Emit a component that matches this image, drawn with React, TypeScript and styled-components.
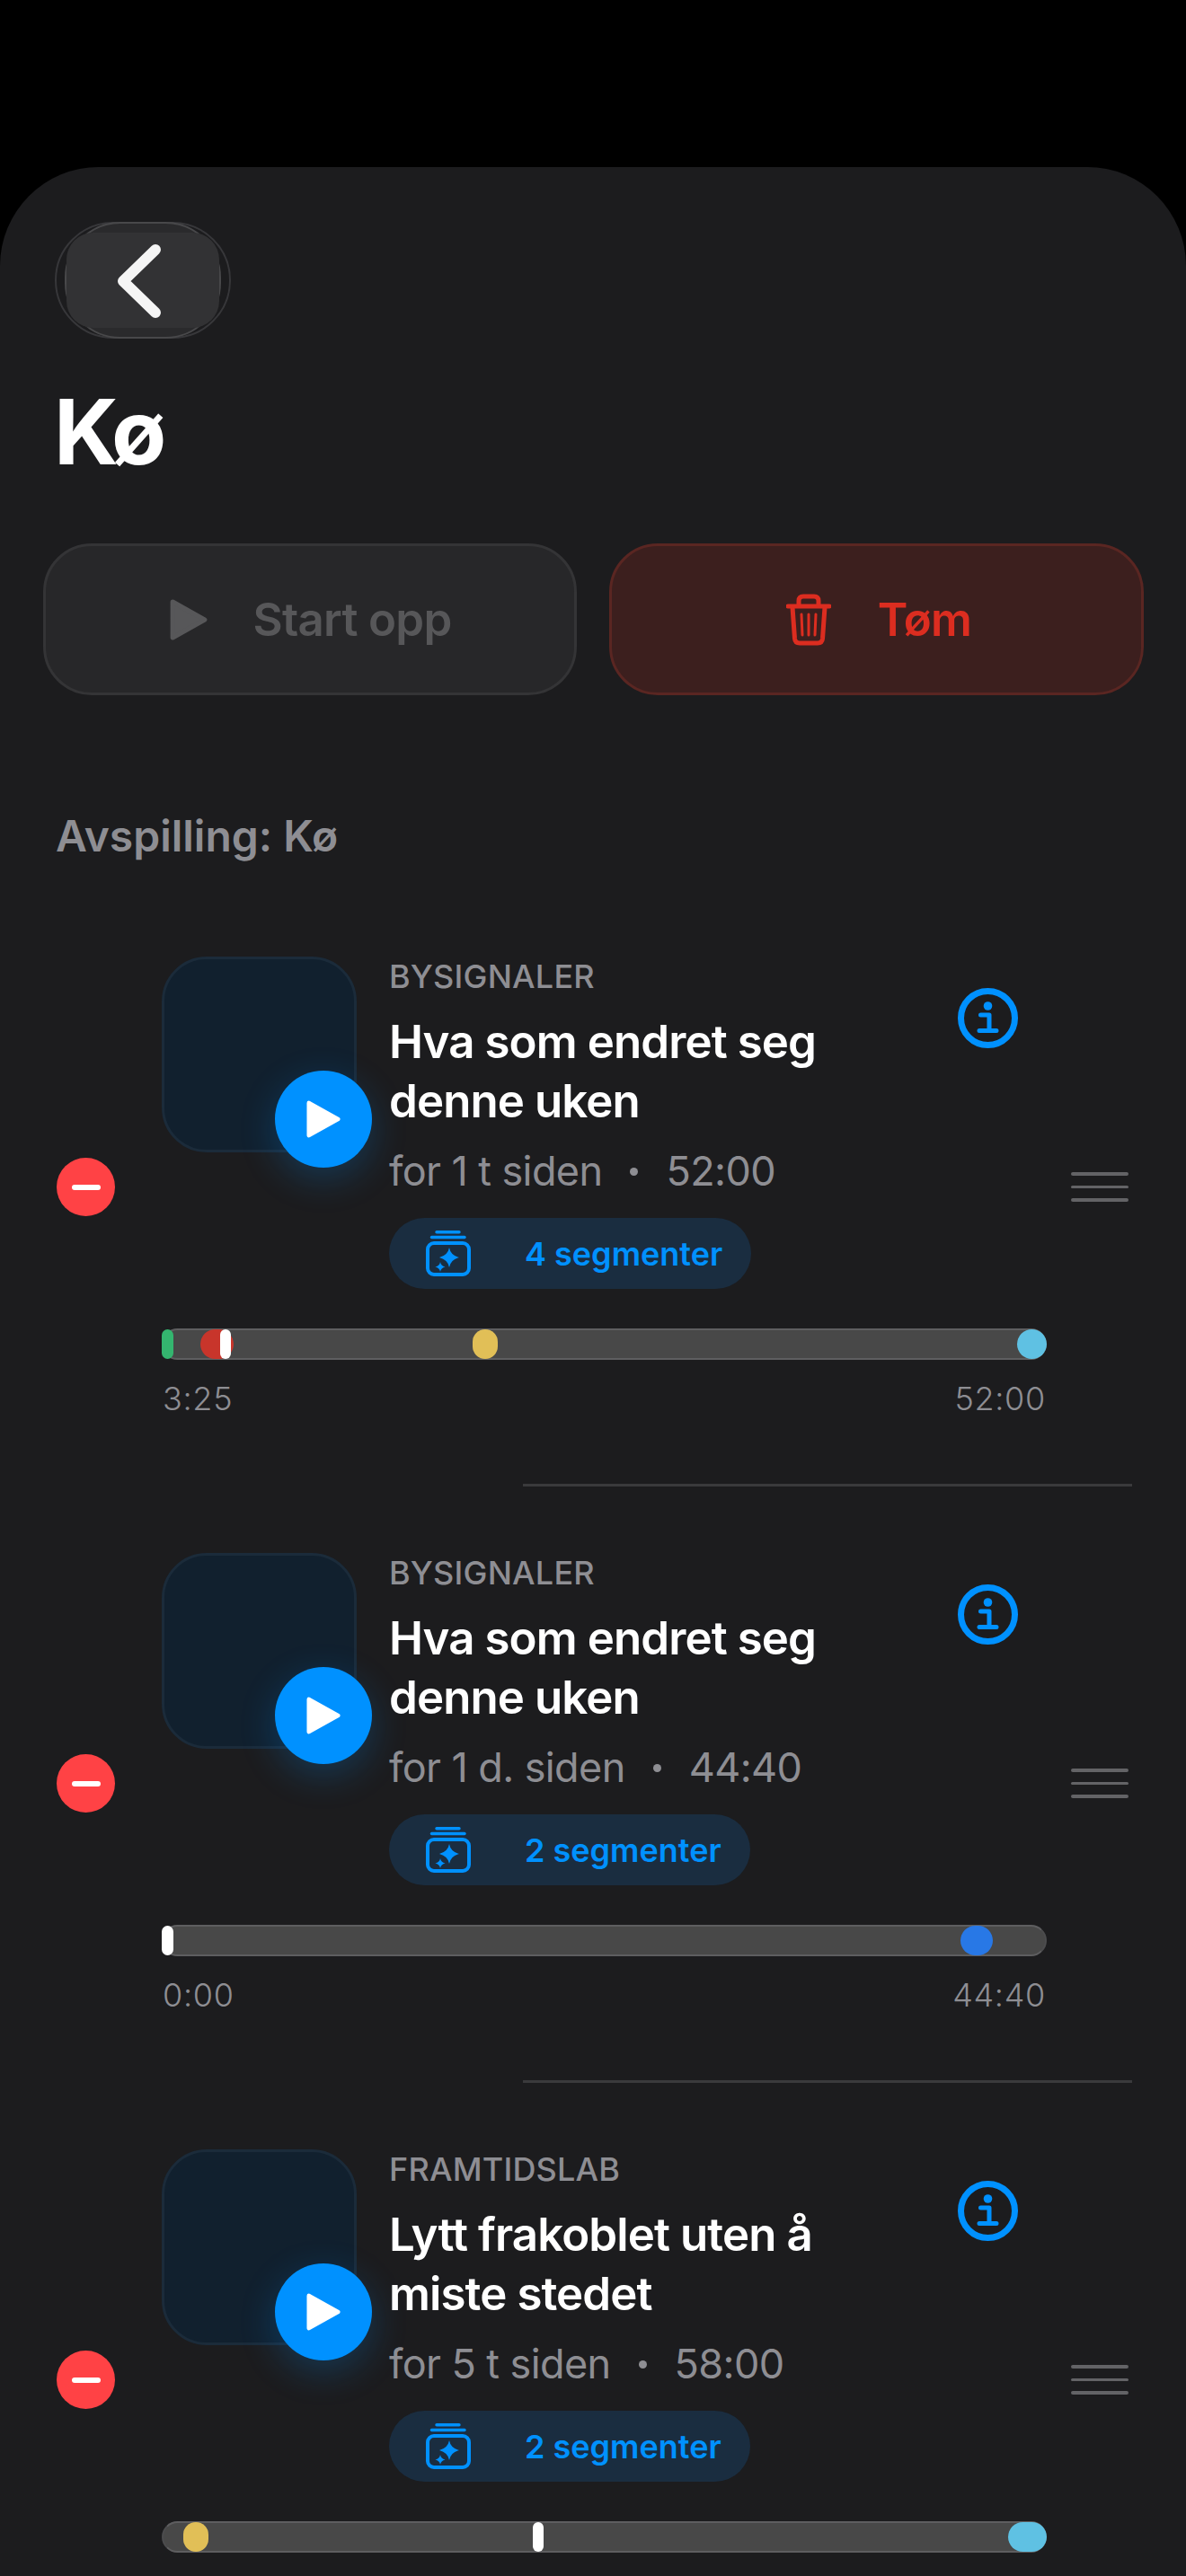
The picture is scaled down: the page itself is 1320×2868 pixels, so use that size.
import React from 'react';
import styled, { createGlobalStyle } from 'styled-components';

const GlobalStyle = createGlobalStyle`
  html, body {
    margin: 0;
    padding: 0;
    background: #000;
  }
  #root {
    height: 2868px;
    overflow: hidden;
  }
  * {
    box-sizing: border-box;
  }
`;

const Sheet = styled.div`
  margin-top: 186px;
  height: 2682px;
  overflow: hidden;
  background: #1c1c1e;
  border-radius: 110px 110px 0 0;
  font-family: Inter, "Noto Sans", sans-serif;
  padding-top: 61px;
`;

const BackButton = styled.div`
  position: relative;
  width: 196px;
  height: 130px;
  margin-left: 61px;
  border: 2px solid #37373a;
  border-radius: 65px;
  display: flex;
  align-items: center;
  justify-content: center;

  &::before {
    content: '';
    position: absolute;
    inset: -2px 9px;
    border: 2px solid #48484a;
    border-radius: 62px;
    background: #2a2a2c;
  }

  &::after {
    content: '';
    position: absolute;
    inset: 10px 11px;
    background: #323234;
    border-radius: 30px;
  }

  svg {
    position: relative;
    z-index: 1;
    margin: 2px 0 0 -9px;
  }
`;

const PageTitle = styled.h1`
  margin: 44px 0 0 60px;
  color: #fff;
  font-size: 100px;
  line-height: 120px;
  font-weight: 700;
  letter-spacing: -4px;
`;

const ActionBar = styled.div`
  display: grid;
  grid-template-columns: 594px 595px;
  gap: 36px;
  margin: 64px 0 0 48px;
`;

const ActionButton = styled.div<{ $danger?: boolean; $gap: number }>`
  height: 169px;
  padding-left: ${(p) => (p.$danger ? 5 : 2)}px;
  border-radius: 54px;
  border: 3px solid ${(p) => (p.$danger ? '#5a2622' : '#343436')};
  background: ${(p) => (p.$danger ? '#3c1f1e' : '#272729')};
  color: ${(p) => (p.$danger ? '#dc2d20' : '#575759')};
  display: flex;
  align-items: center;
  justify-content: center;
  gap: ${(p) => p.$gap}px;
  font-size: 51px;
  font-weight: 600;
  letter-spacing: -0.7px;
`;

const SectionLabel = styled.div`
  margin: 127px 0 30px 62px;
  color: #8e8e93;
  font-size: 48px;
  line-height: 60px;
  font-weight: 600;
`;

const Row = styled.div`
  display: flex;
  align-items: center;
  height: 661px;
  padding-left: 63px;
`;

const RemoveButton = styled.div`
  flex: none;
  width: 65px;
  height: 65px;
  border-radius: 50%;
  background: #ff4245;
  display: flex;
  align-items: center;
  justify-content: center;

  &::before {
    content: '';
    width: 32px;
    height: 6px;
    border-radius: 3px;
    background: #fff;
  }
`;

const RowMain = styled.div`
  flex: none;
  align-self: flex-start;
  width: 985px;
  margin: 74px 0 0 52px;
`;

const DragHandle = styled.div`
  flex: none;
  width: 64px;
  margin-left: 27px;
  display: flex;
  flex-direction: column;
  gap: 11px;

  span {
    height: 3.5px;
    border-radius: 2px;
    background: #636366;
  }
`;

const Episode = styled.div`
  display: flex;
  align-items: flex-start;
`;

const Artwork = styled.div`
  position: relative;
  flex: none;
  width: 217px;
  height: 218px;
  border-radius: 50px;
  background: #11202e;
  border: 3px solid #1b2b3a;
`;

const PlayButton = styled.div`
  position: absolute;
  left: 123px;
  top: 124px;
  width: 108px;
  height: 108px;
  border-radius: 50%;
  background: #0091ff;
  box-shadow: 0 12px 40px rgba(0, 145, 255, 0.24);
  display: flex;
  align-items: center;
  justify-content: center;
`;

const EpisodeText = styled.div`
  flex: none;
  width: 633px;
  margin-left: 36px;
`;

const Category = styled.div`
  color: #8e8e93;
  font-size: 36px;
  line-height: 44px;
  font-weight: 500;
  letter-spacing: 0.2px;
  text-transform: uppercase;
`;

const EpisodeTitle = styled.div`
  margin-top: 18px;
  color: #fff;
  font-size: 51px;
  line-height: 66px;
  font-weight: 600;
  letter-spacing: -0.9px;
`;

const Meta = styled.div`
  margin-top: 16px;
  display: flex;
  align-items: center;
  gap: 31px;
  color: #8e8e93;
  font-size: 45px;
  line-height: 58px;
  letter-spacing: -0.6px;
`;

const MetaDot = styled.span`
  width: 9px;
  height: 9px;
  border-radius: 50%;
  background: #8e8e93;
`;

const SegmentPill = styled.div`
  display: inline-flex;
  align-items: center;
  height: 79px;
  margin-top: 23px;
  padding: 0 32px 0 41px;
  gap: 60px;
  border-radius: 40px;
  background: #1a2d40;
  color: #0091ff;
  font-size: 36px;
  font-weight: 600;
`;

const InfoButton = styled.div`
  flex: none;
  margin-top: 35px;
  width: 67px;
  height: 67px;
`;

const Track = styled.div`
  position: relative;
  margin-top: 44px;
  height: 35px;
  border-radius: 18px;
  background: #484848;
  border: 2px solid #5e5e60;
  border-left-color: #4c4c4e;
  border-right-color: #4c4c4e;
`;

const Marker = styled.div<{ $color: string }>`
  position: absolute;
  top: -1px;
  bottom: -1px;
  border-radius: 17px;
  background: ${(p) => p.$color};
`;

const TimeRow = styled.div`
  display: flex;
  justify-content: space-between;
  margin-top: 21px;
  padding: 0 1px;
  color: #8e8e93;
  font-size: 36px;
  line-height: 44px;
  font-weight: 300;
  letter-spacing: 0.7px;
`;

const Divider = styled.div`
  height: 3px;
  width: 678px;
  margin-left: 582px;
  background: #3a3a3c;
`;

type Mark = { left: number; width: number; color: string };

type Item = {
  show: string;
  title: string[];
  age: string;
  length: string;
  segments: string;
  elapsed?: string;
  marks: Mark[];
};

const GREEN = '#34b56f';
const RED = '#c8352b';
const YELLOW = '#e1bf57';
const CYAN = '#5fc1e3';
const BLUE = '#2878e6';
const WHITE = '#ffffff';

const items: Item[] = [
  {
    show: 'Bysignaler',
    title: ['Hva som endret seg', 'denne uken'],
    age: 'for 1 t siden',
    length: '52:00',
    segments: '4 segmenter',
    elapsed: '3:25',
    marks: [
      { left: 0, width: 13, color: GREEN },
      { left: 43, width: 37, color: RED },
      { left: 65, width: 12, color: WHITE },
      { left: 346, width: 28, color: YELLOW },
      { left: 952, width: 33, color: CYAN },
    ],
  },
  {
    show: 'Bysignaler',
    title: ['Hva som endret seg', 'denne uken'],
    age: 'for 1 d. siden',
    length: '44:40',
    segments: '2 segmenter',
    elapsed: '0:00',
    marks: [
      { left: 889, width: 36, color: BLUE },
      { left: 0, width: 13, color: WHITE },
    ],
  },
  {
    // the time labels of this row fall below the fold
    show: 'Framtidslab',
    title: ['Lytt frakoblet uten å', 'miste stedet'],
    age: 'for 5 t siden',
    length: '58:00',
    segments: '2 segmenter',
    marks: [
      { left: 24, width: 28, color: YELLOW },
      { left: 413, width: 12, color: WHITE },
      { left: 942, width: 43, color: CYAN },
    ],
  },
];

const ChevronIcon = () => (
  <svg width="50" height="82" viewBox="0 0 50 82">
    <path d="M43 6 L7 41 L43 76" fill="none" stroke="#f5f5f5" strokeWidth="12" strokeLinecap="round" strokeLinejoin="round" />
  </svg>
);

const SolidPlay = ({ w, h, color }: { w: number; h: number; color: string }) => (
  <svg width={w} height={h} viewBox="0 0 40 44">
    <path d="M3 3 L37 22 L3 41 Z" fill={color} stroke={color} strokeWidth="5" strokeLinejoin="round" />
  </svg>
);

const TrashIcon = () => (
  <svg width="50" height="58" viewBox="0 0 50 58" fill="none" stroke="#dc2d20" strokeLinecap="round" strokeLinejoin="round">
    <path d="M2 14 H48" strokeWidth="5" />
    <path d="M14 13 V8 Q14 3 19 3 H31 Q36 3 36 8 V13" strokeWidth="5" />
    <path d="M7 15 L9.5 50 Q10 55 15 55 H35 Q40 55 40.5 50 L43 15" strokeWidth="5" />
    <path d="M17 23 L18 46 M25 23 V46 M33 23 L32 46" strokeWidth="3" />
  </svg>
);

const InfoIcon = () => (
  <svg width="67" height="67" viewBox="0 0 67 67">
    <circle cx="33.5" cy="33.5" r="30" fill="none" stroke="#0091ff" strokeWidth="7" />
    <circle cx="33.5" cy="20" r="4.8" fill="#0091ff" />
    <path d="M25.5 30 H35 V47 M24 47.5 H43" fill="none" stroke="#0091ff" strokeWidth="5" strokeLinecap="round" strokeLinejoin="round" />
  </svg>
);

const SegmentsIcon = () => (
  <svg width="50" height="51" viewBox="0 0 50 51">
    <path d="M12 1.7 H37" stroke="#0091ff" strokeWidth="3.4" strokeLinecap="round" />
    <path d="M6.5 7.5 H43" stroke="#0091ff" strokeWidth="3.4" strokeLinecap="round" />
    <rect x="2" y="14" width="46" height="35" rx="7" fill="none" stroke="#0091ff" strokeWidth="4" />
    <path d="M26 19 Q27.5 27.5 37 30 Q27.5 32.5 26 41 Q24.5 32.5 15 30 Q24.5 27.5 26 19 Z" fill="#0091ff" />
    <path d="M16 35 Q16.7 39.3 21.5 40.5 Q16.7 41.7 16 46 Q15.3 41.7 10.5 40.5 Q15.3 39.3 16 35 Z" fill="#0091ff" />
  </svg>
);

const QueueRow = ({ item }: { item: Item }) => (
  <Row>
    <RemoveButton />
    <RowMain>
      <Episode>
        <Artwork>
          <PlayButton>
            <SolidPlay w={38} h={42} color="#fff" />
          </PlayButton>
        </Artwork>
        <EpisodeText>
          <Category>{item.show}</Category>
          <EpisodeTitle>
            {item.title[0]}
            <br />
            {item.title[1]}
          </EpisodeTitle>
          <Meta>
            <span>{item.age}</span>
            <MetaDot />
            <span>{item.length}</span>
          </Meta>
          <SegmentPill>
            <SegmentsIcon />
            {item.segments}
          </SegmentPill>
        </EpisodeText>
        <InfoButton>
          <InfoIcon />
        </InfoButton>
      </Episode>
      <Track>
        {item.marks.map((m) => (
          <Marker key={m.left} $color={m.color} style={{ left: m.left - 2, width: m.width }} />
        ))}
      </Track>
      {item.elapsed && (
        <TimeRow>
          <span>{item.elapsed}</span>
          <span>{item.length}</span>
        </TimeRow>
      )}
    </RowMain>
    <DragHandle>
      <span />
      <span />
      <span />
    </DragHandle>
  </Row>
);

const App: React.FC = () => (
  <>
    <GlobalStyle />
    <Sheet>
      <BackButton>
        <ChevronIcon />
      </BackButton>
      <PageTitle>Kø</PageTitle>
      <ActionBar>
        <ActionButton $gap={50}>
          <SolidPlay w={42} h={46} color="#575759" />
          Start opp
        </ActionButton>
        <ActionButton $danger $gap={52}>
          <TrashIcon />
          Tøm
        </ActionButton>
      </ActionBar>
      <SectionLabel>Avspilling: Kø</SectionLabel>
      {items.map((item, i) => (
        <React.Fragment key={i}>
          <QueueRow item={item} />
          <Divider />
        </React.Fragment>
      ))}
    </Sheet>
  </>
);

export default App;
